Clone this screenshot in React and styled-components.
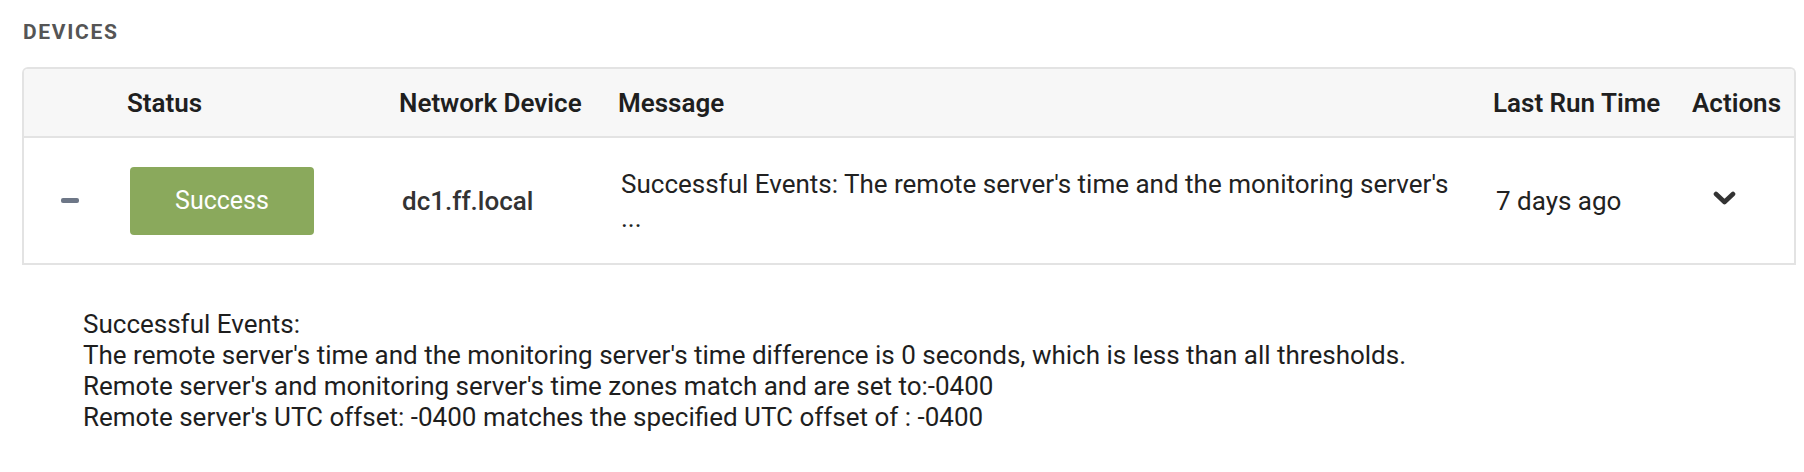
import React from "react";
import styled, { createGlobalStyle } from "styled-components";

const GlobalStyle = createGlobalStyle`
  html, body { margin: 0; padding: 0; background: #ffffff; }
  body { font-family: Roboto, "Noto Sans", sans-serif; color: #222; }
`;

const Page = styled.div`
  padding: 0 8px 0 22px;
`;

const SectionTitle = styled.h2`
  margin: 0;
  padding-top: 18px;
  height: 67px;
  box-sizing: border-box;
  font-size: 21px;
  line-height: 28px;
  font-weight: 700;
  letter-spacing: 1.7px;
  color: #555;
  padding-left: 1px;
`;

const Table = styled.div`
  border: 2px solid #e3e3e3;
  border-bottom: none;
  border-radius: 6px 6px 0 0;
  overflow: hidden;
`;

const Row = styled.div`
  display: grid;
  grid-template-columns: 91px 272px 219px 875px 199px 1fr;
  align-items: center;
  height: ${(p) => p.$h}px;
  background: ${(p) => p.$bg || "#fff"};
  border-bottom: 2px solid #e3e3e3;
`;

const HeadCell = styled.div`
  padding-left: 12px;
  font-size: 26px;
  font-weight: 600;
  color: #1f1f1f;
  white-space: nowrap;
`;

const Cell = styled.div`
  padding-left: ${(p) => (p.$pad != null ? p.$pad : 15)}px;
  font-size: 26px;
  color: #222;
  display: flex;
  align-items: center;
  justify-content: ${(p) => (p.$center ? "center" : "flex-start")};
`;

const Minus = styled.span`
  display: block;
  width: 18px;
  height: 5px;
  border-radius: 2px;
  background: #6d7787;
`;

const Badge = styled.div`
  width: 184px;
  height: 68px;
  border-radius: 4px;
  background: #8aa95c;
  color: #fff;
  font-size: 25px;
  display: flex;
  align-items: center;
  justify-content: center;
`;

const Device = styled.span`
  font-weight: 500;
  color: #333;
`;

const Message = styled.div`
  line-height: 34px;
  white-space: nowrap;
`;

const ChevronWrap = styled.span`
  display: flex;
  margin-bottom: 6px;
`;

const Details = styled.div`
  padding: 44px 0 0 61px;
  font-size: 26px;
  line-height: 31px;
  color: #1e1e1e;
`;

const Chevron = () => (
  <ChevronWrap>
    <svg width="23" height="14" viewBox="0 0 23 14">
      <polyline
        points="3,3 11.5,11 20,3"
        fill="none"
        stroke="#333"
        strokeWidth="4.6"
        strokeLinecap="round"
        strokeLinejoin="round"
      />
    </svg>
  </ChevronWrap>
);

export default function App() {
  return (
    <>
      <GlobalStyle />
      <Page>
        <SectionTitle>DEVICES</SectionTitle>
        <Table>
          <Row $h={67} $bg="#f7f7f7">
            <HeadCell />
            <HeadCell>Status</HeadCell>
            <HeadCell>Network Device</HeadCell>
            <HeadCell>Message</HeadCell>
            <HeadCell>Last Run Time</HeadCell>
            <HeadCell>Actions</HeadCell>
          </Row>
          <Row $h={125}>
            <Cell $pad={0} $center>
              <Minus />
            </Cell>
            <Cell>
              <Badge>Success</Badge>
            </Cell>
            <Cell>
              <Device>dc1.ff.local</Device>
            </Cell>
            <Cell>
              <Message>
                Successful Events: The remote server's time and the monitoring server's
                <br />
                ...
              </Message>
            </Cell>
            <Cell>7 days ago</Cell>
            <Cell $pad={33}>
              <Chevron />
            </Cell>
          </Row>
        </Table>
        <Details>
          Successful Events:
          <br />
          The remote server's time and the monitoring server's time difference is 0 seconds, which is less than all thresholds.
          <br />
          Remote server's and monitoring server's time zones match and are set to:-0400
          <br />
          Remote server's UTC offset: -0400 matches the specified UTC offset of : -0400
        </Details>
      </Page>
    </>
  );
}
